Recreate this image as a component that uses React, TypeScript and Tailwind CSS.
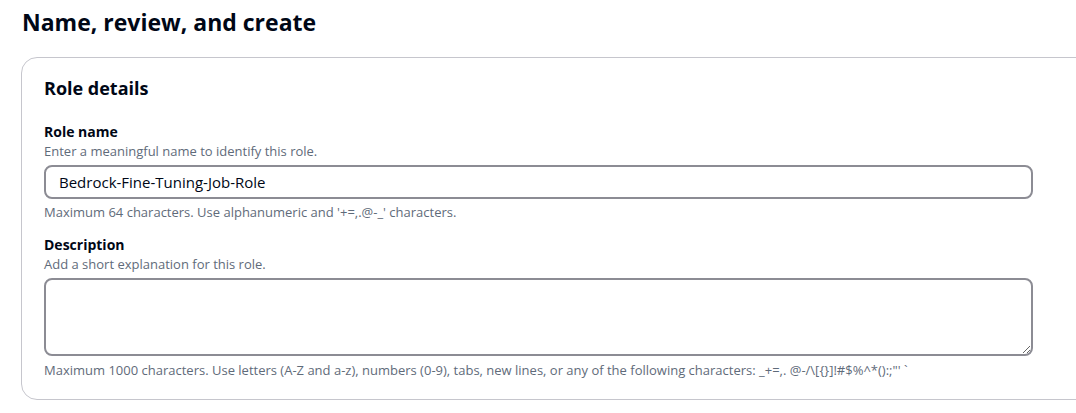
import React from 'react'

export default function App() {
  return (
    <div className="w-[1076px] h-[413px] overflow-hidden bg-white text-[#000716] font-['Open_Sans',Arial,sans-serif]">
      <div className="pl-[21px] pt-[7px]">
        <h1 className="pl-px text-[23px] leading-[30px] font-bold">
          Name, review, and create
        </h1>
        <div className="mt-[20px] w-[1100px] rounded-[16px] border border-[#c6c6cd] pl-[22px] pt-[16px] pb-[20px]">
          <h2 className="text-[18px] leading-[28px] font-bold">Role details</h2>

          <div className="mt-[20px] w-[989px]">
            <label htmlFor="roleName" className="block text-[14px] leading-[20px] font-bold">
              Role name
            </label>
            <p className="text-[13px] leading-[18px] text-[#5f6b7a]">
              Enter a meaningful name to identify this role.
            </p>
            <input
              id="roleName"
              type="text"
              defaultValue="Bedrock-Fine-Tuning-Job-Role"
              className="mt-[5px] block w-full h-[34px] rounded-[8px] border-2 border-[#8c8c94] px-[13px] text-[15px] text-[#000716] outline-none"
            />
            <p className="mt-[4px] text-[13px] leading-[18px] text-[#5f6b7a]">
              Maximum 64 characters. Use alphanumeric and '+=,.@-_' characters.
            </p>
          </div>

          <div className="mt-[14px] w-[989px]">
            <label htmlFor="desc" className="block text-[14px] leading-[20px] font-bold">
              Description
            </label>
            <p className="text-[13px] leading-[18px] text-[#5f6b7a]">
              Add a short explanation for this role.
            </p>
            <textarea
              id="desc"
              className="mt-[5px] block w-full h-[78px] rounded-[8px] border-2 border-[#8c8c94] px-[13px] py-[6px] text-[15px] outline-none"
            />
            <p className="mt-[5px] text-[13px] leading-[18px] text-[#5f6b7a]">
              Maximum 1000 characters. Use letters (A-Z and a-z), numbers (0-9), tabs, new lines, or any of the following characters: _+=,. @-/\[{'{}'}]!#$%^*():;"' `
            </p>
          </div>
        </div>
      </div>
    </div>
  )
}
